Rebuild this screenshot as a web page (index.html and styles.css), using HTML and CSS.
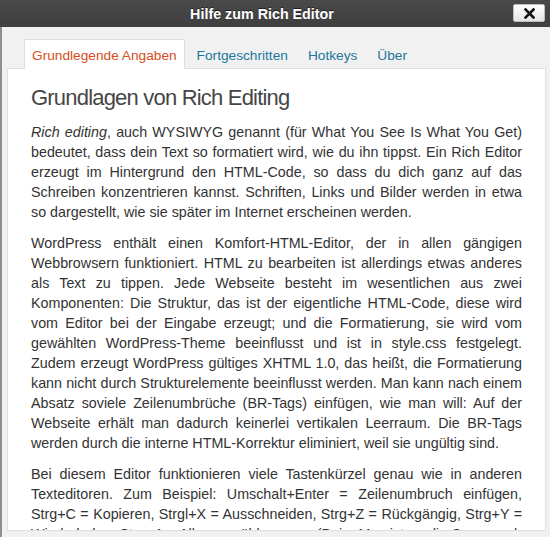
FILE: index.html
```html
<!DOCTYPE html>
<html lang="de">
<head>
<meta charset="utf-8">
<title>Hilfe zum Rich Editor</title>
<link rel="stylesheet" href="styles.css">
</head>
<body>
<div class="window">
  <div class="titlebar">
    <span class="title">Hilfe zum Rich Editor</span>
    <button class="close" aria-label="Schließen">
      <svg width="11" height="11" viewBox="0 0 11 11"><path d="M1.5 1.5 L9.5 9.5 M9.5 1.5 L1.5 9.5" stroke="#111" stroke-width="2.6" stroke-linecap="square"/></svg>
    </button>
  </div>
  <div class="content">
    <ul class="tabs">
      <li class="tab active">Grundlegende Angaben</li>
      <li class="tab">Fortgeschritten</li>
      <li class="tab">Hotkeys</li>
      <li class="tab">Über</li>
    </ul>
    <div class="panel">
      <h2 class="heading">Grundlagen von Rich Editing</h2>
      <p class="para"><em>Rich editing</em>, auch WYSIWYG genannt (für What You See Is What You Get) bedeutet, dass dein Text so formatiert wird, wie du ihn tippst. Ein Rich Editor erzeugt im Hintergrund den HTML-Code, so dass du dich ganz auf das Schreiben konzentrieren kannst. Schriften, Links und Bilder werden in etwa so dargestellt, wie sie später im Internet erscheinen werden.</p>
      <p class="para">WordPress enthält einen Komfort-HTML-Editor, der in allen gängigen Webbrowsern funktioniert. HTML zu bearbeiten ist allerdings etwas anderes als Text zu tippen. Jede Webseite besteht im wesentlichen aus zwei Komponenten: Die Struktur, das ist der eigentliche HTML-Code, diese wird vom Editor bei der Eingabe erzeugt; und die Formatierung, sie wird vom gewählten WordPress-Theme beeinflusst und ist in style.css festgelegt. Zudem erzeugt WordPress gültiges XHTML 1.0, das heißt, die Formatierung kann nicht durch Strukturelemente beeinflusst werden. Man kann nach einem Absatz soviele Zeilenumbrüche (BR-Tags) einfügen, wie man will: Auf der Webseite erhält man dadurch keinerlei vertikalen Leerraum. Die BR-Tags werden durch die interne HTML-Korrektur eliminiert, weil sie ungültig sind.</p>
      <p class="para">Bei diesem Editor funktionieren viele Tastenkürzel genau wie in anderen Texteditoren. Zum Beispiel: Umschalt+Enter = Zeilenumbruch einfügen, Strg+C = Kopieren, Strgl+X = Ausschneiden, Strg+Z = Rückgängig, Strg+Y = Wiederholen, Strg+A = Alle auswählen, usw. (Beim Mac ist es die Command-Taste anstelle der Strg-Taste.)</p>
    </div>
  </div>
</div>
</body>
</html>
```

FILE: styles.css
```css
html, body {
  margin: 0;
  padding: 0;
  height: 100%;
  overflow: hidden;
}
body {
  font-family: "Liberation Sans", Arial, sans-serif;
  background: #f1f1f1;
}
.window {
  display: flex;
  flex-direction: column;
  height: 537px;
}
.titlebar {
  position: relative;
  height: 27px;
  flex: none;
  background: linear-gradient(#4a4a4a, #3f3f3f);
  color: #fff;
  display: flex;
  align-items: center;
  justify-content: center;
}
.title {
  font-weight: bold;
  font-size: 14.3px;
  padding-top: 1px;
  margin-right: 26px;
  text-shadow: 0 -1px 0 #222;
}
.close {
  position: absolute;
  right: 5px;
  top: 4px;
  width: 32px;
  height: 18px;
  padding: 0;
  border: 1px solid #bdbdbd;
  border-radius: 2px;
  background: linear-gradient(#ffffff, #e4e4e4);
  display: flex;
  align-items: center;
  justify-content: center;
}
.content {
  flex: 1;
  display: flex;
  flex-direction: column;
  border-left: 2px solid #8f8f8f;
  padding: 12px 4px 6px 5px;
  min-height: 0;
}
.tabs {
  list-style: none;
  margin: 0 0 -1px 0;
  padding: 0 0 0 17px;
  display: flex;
  gap: 4px;
  position: relative;
  z-index: 1;
}
.tab {
  height: 29px;
  line-height: 31px;
  padding: 0 7px;
  font-size: 13.7px;
  color: #21759b;
  border: 1px solid transparent;
  border-bottom: none;
}
.tab.active {
  color: #d54e21;
  background: #fff;
  border-color: #dfdfdf;
  padding-right: 7px;
}
.panel {
  flex: 1;
  min-height: 0;
  overflow: hidden;
  background: #fff;
  border: 1px solid #dfdfdf;
  padding: 0 23px 0 23px;
}
.heading {
  margin: 15px 0 0 0;
  font-size: 22px;
  font-weight: normal;
  letter-spacing: -0.8px;
  color: #464646;
  line-height: 28px;
}
.para {
  margin: 10px 0 0 0;
  font-size: 14.3px;
  line-height: 20px;
  color: #333;
  text-align: justify;
}
.para + .para {
  margin-top: 11px;
}
```
